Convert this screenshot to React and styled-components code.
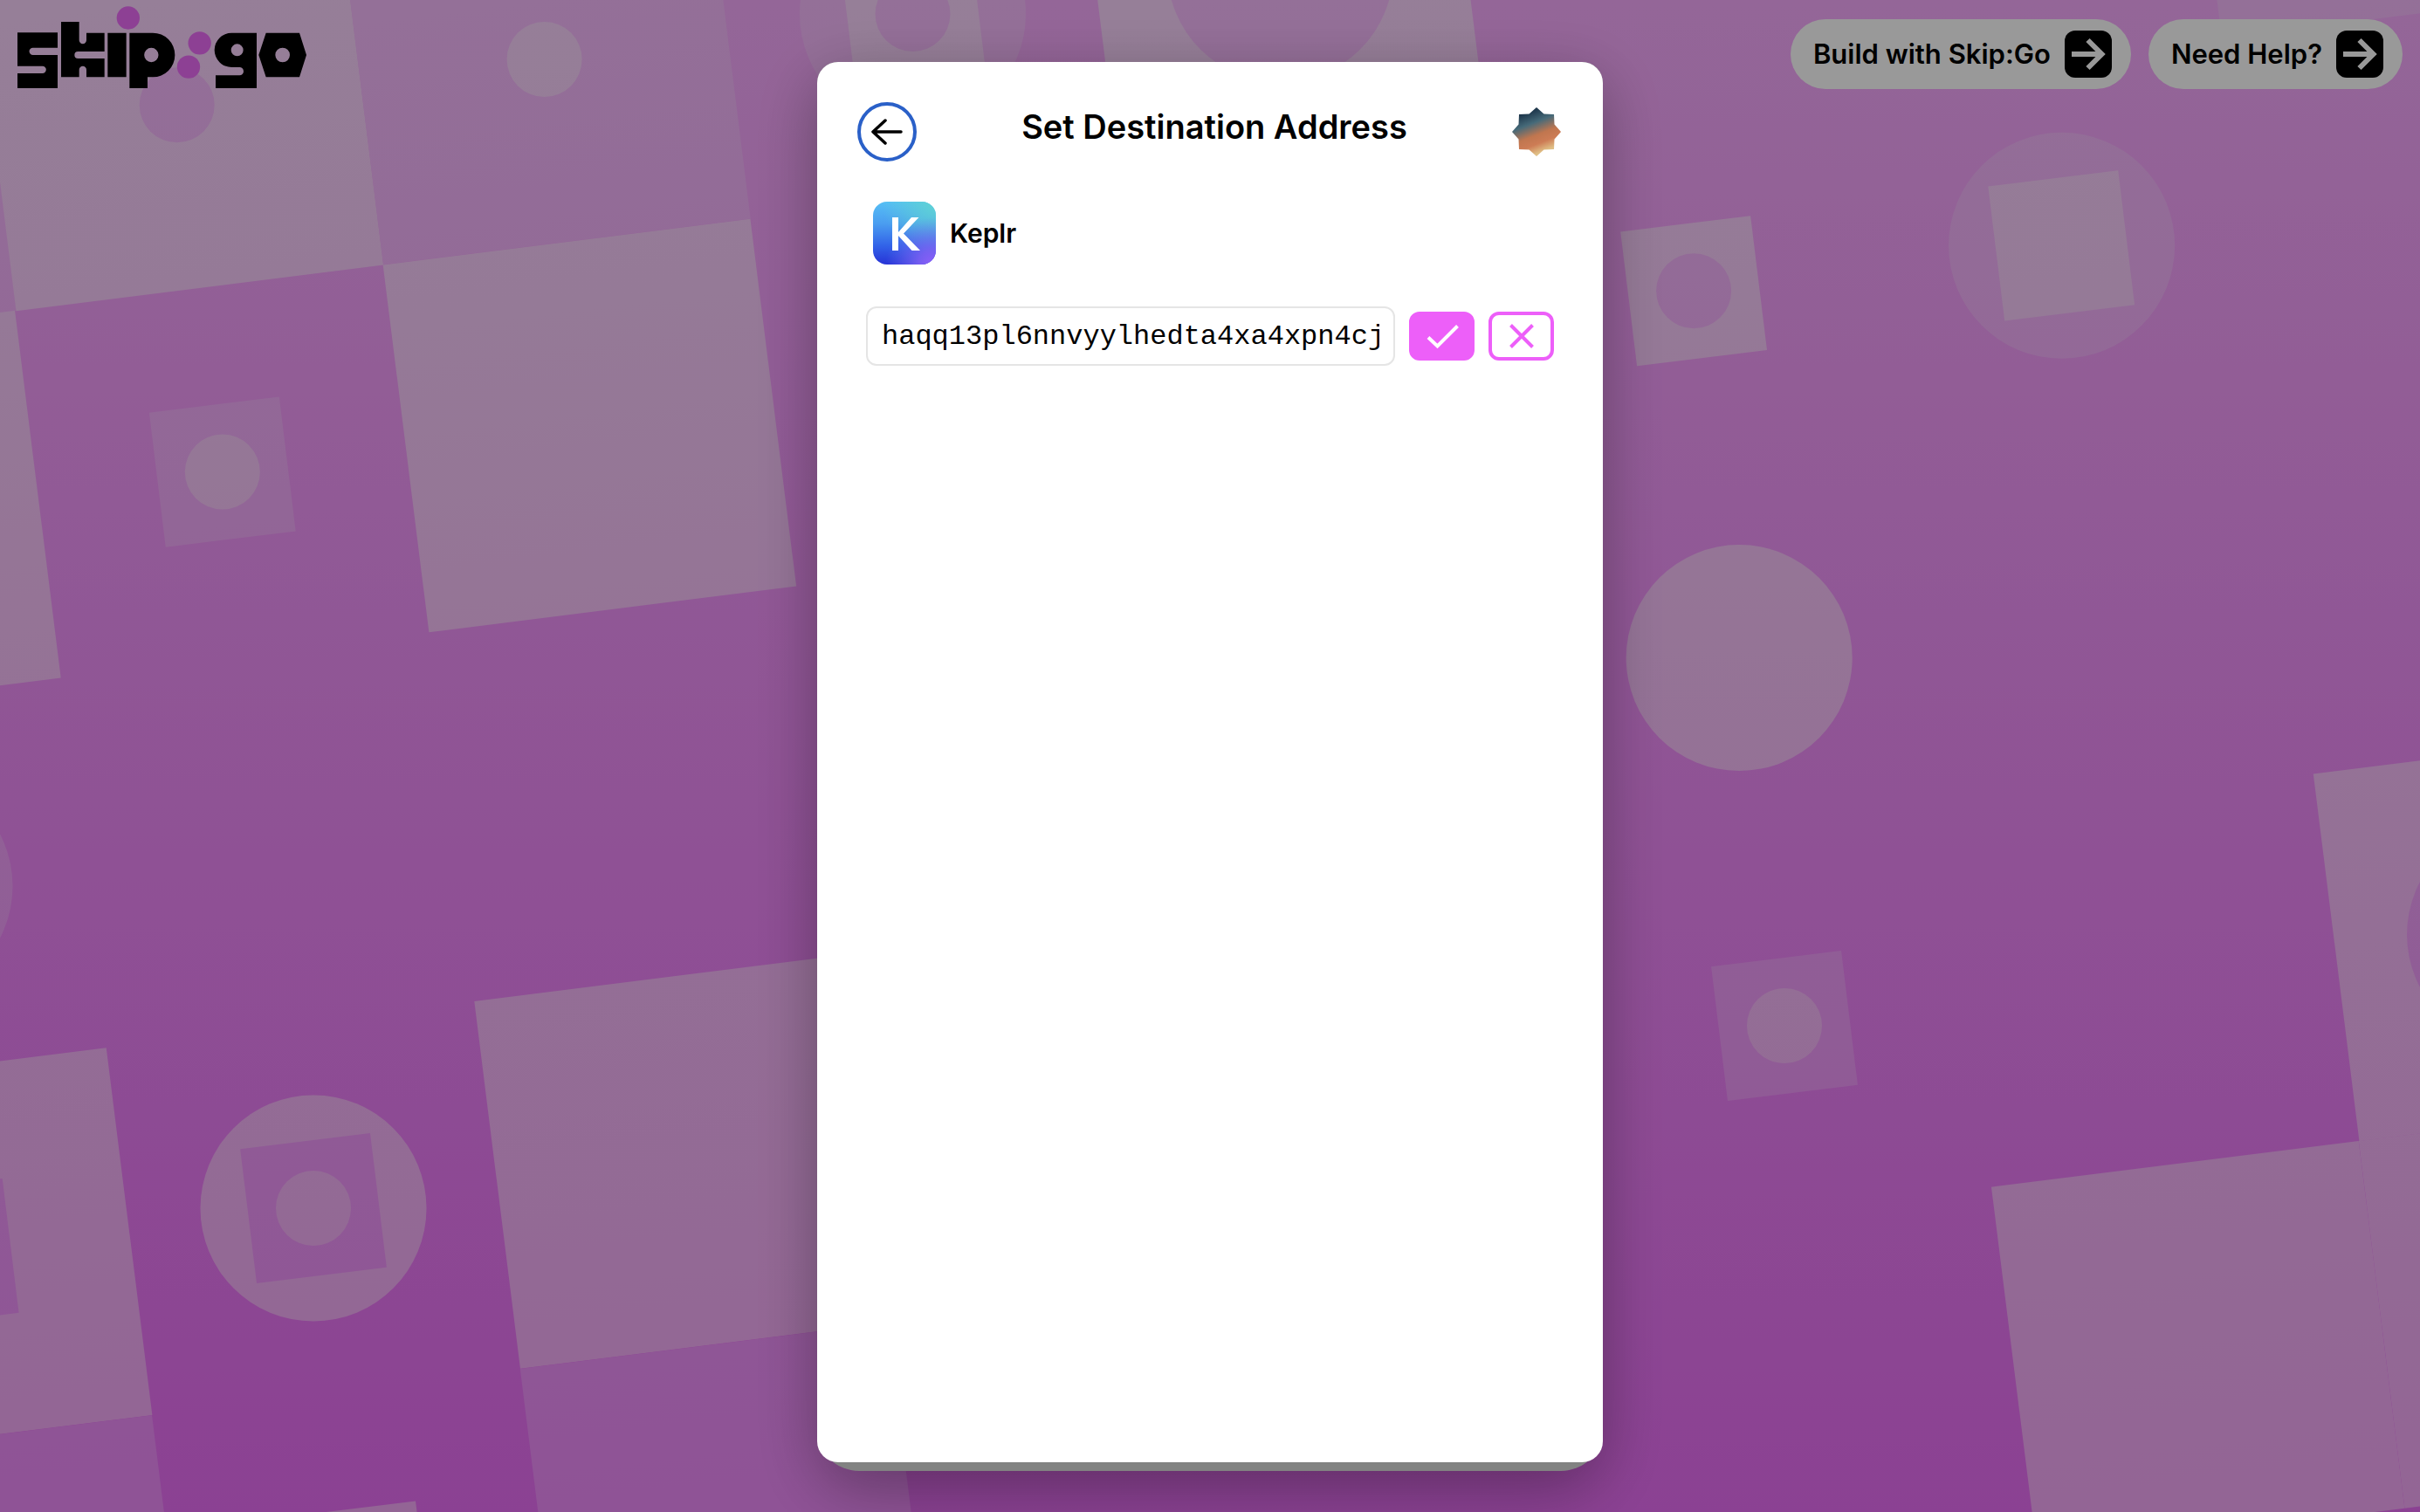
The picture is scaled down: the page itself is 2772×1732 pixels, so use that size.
import React from "react";
import styled, { createGlobalStyle } from "styled-components";

const GlobalStyle = createGlobalStyle`
  *, *::before, *::after { box-sizing: border-box; }
  body {
    margin: 0;
    font-family: Inter, "Liberation Sans", sans-serif;
    color: #000;
    background: #f087f9;
  }
`;

const Page = styled.div`
  min-height: 100vh;
`;

const Scene = styled.svg`
  position: fixed;
  inset: 0;
  z-index: -1;
  width: 100%;
  height: 100%;
`;

const TopBar = styled.header`
  display: flex;
  align-items: flex-start;
  justify-content: space-between;
  padding: 0 20px;
`;

const HomeLink = styled.a`
  display: block;
  padding-top: 7px;
`;

const Wordmark = styled.svg`
  display: block;
  width: 331px;
  height: 94px;
`;

const Nav = styled.nav`
  display: flex;
  gap: 20px;
  padding-top: 22px;
`;

const PillLink = styled.a`
  display: flex;
  align-items: center;
  gap: 16px;
  height: 80px;
  padding: 0 22px 0 26px;
  border-radius: 40px;
  background: #fff;
  color: #000;
  font-size: 31px;
  font-weight: 600;
  line-height: 40px;
  text-decoration: none;
  white-space: nowrap;
`;

const PillIcon = styled.svg`
  width: 54px;
  height: 54px;
  flex: none;
`;

const Backdrop = styled.div`
  position: fixed;
  inset: 0;
  display: flex;
  justify-content: center;
  padding: 71px 16px 47px;
  background: rgba(0, 0, 0, 0.4);
`;

const CardStack = styled.div`
  display: flex;
  width: 100%;
  max-width: 900px;
  padding-bottom: 10px;
  border-radius: 24px 24px 48px 48px;
  background: #828382;
  box-shadow: 0 20px 72px rgba(0, 0, 0, 0.32);
`;

const Dialog = styled.section`
  flex: 1;
  display: flex;
  flex-direction: column;
  padding: 46px 48px 46px 46px;
  border-radius: 24px;
  background: #fff;
`;

const DialogHeader = styled.header`
  display: grid;
  grid-template-columns: 68px 1fr 56px;
  align-items: center;
`;

const BackButton = styled.button`
  display: grid;
  place-items: center;
  width: 68px;
  height: 68px;
  padding: 0;
  border: 4px solid #2a60c8;
  border-radius: 50%;
  background: #fff;
  cursor: pointer;
`;

const Title = styled.h1`
  margin: 0;
  padding-bottom: 12px;
  font-size: 38px;
  font-weight: 600;
  line-height: 48px;
  text-align: center;
`;

const WalletRow = styled.div`
  display: flex;
  align-items: center;
  gap: 16px;
  padding: 46px 18px 0;
`;

const WalletName = styled.span`
  font-size: 30px;
  font-weight: 600;
  line-height: 36px;
`;

const AddressForm = styled.form`
  display: flex;
  align-items: center;
  gap: 16px;
  padding: 48px 8px 0 10px;
`;

const AddressInput = styled.input`
  flex: 1;
  min-width: 0;
  height: 68px;
  padding: 0 16px;
  border: 2px solid #e5e5e5;
  border-radius: 12px;
  background: #fff;
  color: #000;
  font-family: "Liberation Mono", "DejaVu Sans Mono", monospace;
  font-size: 32px;
  outline: none;
`;

const ActionButton = styled.button`
  display: grid;
  place-items: center;
  width: 75px;
  height: 56px;
  padding: 0;
  border: 4px solid #ed5ff9;
  border-radius: 12px;
  background: ${(p) => (p.$filled ? "#ed5ff9" : "#fff")};
  color: ${(p) => (p.$filled ? "#fff" : "#ed5ff9")};
  cursor: pointer;
`;

const ActionIcon = styled.svg`
  width: 40px;
  height: 32px;
  fill: none;
  stroke: currentColor;
  stroke-width: 4;
`;

const LIGHT = "url(#light)";
const FAINT = "url(#faint)";

function Tile({ x, y, fill }) {
  return (
    <rect x={x - 212} y={y - 212} width="424" height="424" fill={fill} transform={`rotate(-7.14 ${x} ${y})`} />
  );
}

function Square({ x, y, fill }) {
  return (
    <rect x={x - 75} y={y - 77.5} width="150" height="155" fill={fill} transform={`rotate(-7 ${x} ${y})`} />
  );
}

function Disc({ x, y, fill }) {
  return <circle cx={x} cy={y} r="129.5" fill={fill} />;
}

function Dot({ x, y, fill }) {
  return <circle cx={x} cy={y} r="43" fill={fill} />;
}

function Gradient({ id, from, to }) {
  return (
    <linearGradient id={id} gradientUnits="userSpaceOnUse" x1="0" y1="0" x2="0" y2="1732">
      <stop offset="0" stopColor={from} />
      <stop offset="1" stopColor={to} />
    </linearGradient>
  );
}

function Background() {
  return (
    <Scene viewBox="0 0 2772 1732" preserveAspectRatio="xMidYMid slice" aria-hidden="true">
      <defs>
        <Gradient id="base" from="#f7abfd" to="#e86df5" />
        <Gradient id="light" from="#fad4fd" to="#f5a8f8" />
        <Gradient id="faint" from="#f7bbfd" to="#ee8afa" />
      </defs>
      <rect width="2772" height="1732" fill="url(#base)" />

      <Tile x={-218} y={172} fill={FAINT} />
      <Tile x={202.5} y={119.5} fill={LIGHT} />
      <Dot x={202.7} y={120.3} fill={FAINT} />
      <Tile x={623} y={66.5} fill={FAINT} />
      <Dot x={623.6} y={68} fill={LIGHT} />
      <Tile x={675.4} y={487.5} fill={LIGHT} />
      <Tile x={-167} y={592.5} fill={LIGHT} />
      <Square x={254.8} y={540.6} fill={FAINT} />
      <Dot x={254.8} y={540.6} fill={LIGHT} />

      <Disc x={1045.5} y={16} fill={FAINT} />
      <Square x={1045.5} y={16} fill={LIGHT} />
      <Dot x={1045.5} y={16} fill={FAINT} />
      <Tile x={1466.5} y={-35} fill={LIGHT} />
      <Disc x={1466.5} y={-35} fill={FAINT} />

      <Tile x={2729} y={-193} fill={FAINT} />
      <Disc x={2361.6} y={281.3} fill={FAINT} />
      <Square x={2361.2} y={281.4} fill={LIGHT} />
      <Square x={1940.1} y={333.2} fill={LIGHT} />
      <Dot x={1940.1} y={333.2} fill={FAINT} />
      <Disc x={1992.2} y={753.6} fill={LIGHT} />
      <Square x={2044} y={1175} fill={FAINT} />
      <Dot x={2044} y={1175} fill={LIGHT} />
      <Tile x={2886.5} y={1070.5} fill={LIGHT} />
      <Disc x={2886.5} y={1070.5} fill={FAINT} />
      <Tile x={2517.7} y={1543.7} fill={LIGHT} />
      <Tile x={2938.5} y={1491} fill={LIGHT} />

      <Disc x={-115} y={1015} fill={FAINT} />
      <Tile x={-62.3} y={1437} fill={LIGHT} />
      <Square x={-62.3} y={1436} fill={FAINT} />
      <Tile x={-10} y={1858} fill={FAINT} />
      <Disc x={359} y={1384} fill={LIGHT} />
      <Square x={359} y={1384} fill={FAINT} />
      <Dot x={359} y={1384} fill={LIGHT} />
      <Square x={411} y={1805.5} fill={LIGHT} />
      <Tile x={780} y={1331} fill={LIGHT} />
      <Tile x={832.5} y={1752} fill={FAINT} />
    </Scene>
  );
}

function SkipGoLogo() {
  return (
    <Wordmark viewBox="60 21 993 282" role="img" aria-label="skip:go">
      <g fill="#000" fillRule="evenodd">
        <path d="M60 112H198V164H113a12.5 12.5 0 0 0 0 25H198V303H60V252H146a12.5 12.5 0 0 0 0-25H60Z" />
        <path d="M210 75H272V138a12.5 12.5 0 0 0 25 0V113H359V177H268a12 12 0 0 0 0 24H359V265H297V240a12.5 12.5 0 0 0-25 0V265H210Z" />
        <path d="M370 113H434V265H370Z" />
        <path d="M445 113H525a76 76 0 0 1 0 152H507V303H445ZM495.500 189a24.500 24.500 0 1 0 49 0a24.500 24.500 0 1 0-49 0Z" />
        <path d="M882 113V303H741V259H823a14 14 0 0 0 0-28H796a59 59 0 0 1 0-118ZM794 172a21 21 0 1 0 42 0a21 21 0 1 0-42 0Z" />
        <path d="M914 113H1029L1053 189L1029 265H914L889 189ZM946 189a25 25 0 1 0 50 0a25 25 0 1 0-50 0Z" />
      </g>
      <g fill="#eb6cf7">
        <circle cx="440.500" cy="61.500" r="39.500" />
        <circle cx="686" cy="148" r="39.500" />
        <circle cx="648" cy="230" r="39.500" />
      </g>
    </Wordmark>
  );
}

function ArrowBadge() {
  return (
    <PillIcon viewBox="0 0 54 54" aria-hidden="true">
      <rect width="54" height="54" rx="12" fill="#000" />
      <path d="M8 27H40M26.500 11L42.500 27L26.500 43" fill="none" stroke="#fff" strokeWidth="6" />
    </PillIcon>
  );
}

function AccountStar() {
  return (
    <svg width="56" height="56" viewBox="-28 -28 56 56" aria-hidden="true">
      <defs>
        <linearGradient id="star" gradientUnits="userSpaceOnUse" x1="-11" y1="-25" x2="9" y2="26">
          <stop offset="0" stopColor="#152c42" />
          <stop offset="0.3" stopColor="#466a79" />
          <stop offset="0.56" stopColor="#c0764f" />
          <stop offset="0.74" stopColor="#cd7c55" />
          <stop offset="0.92" stopColor="#dfbd84" />
          <stop offset="1" stopColor="#e2c48c" />
        </linearGradient>
      </defs>
      <path
        d="M0-28L8.500-20.500L20-20L20.500-8.500L28 0L20.500 8.500L20 20L8.500 20.500L0 28L-8.500 20.500L-20 20L-20.500 8.500L-28 0L-20.500-8.500L-20-20L-8.500-20.500Z"
        fill="url(#star)"
      />
    </svg>
  );
}

function KeplrLogo() {
  return (
    <svg width="72" height="72" viewBox="0 0 72 72" aria-hidden="true">
      <defs>
        <linearGradient id="keplrBase" x1="0" y1="0" x2="0" y2="1">
          <stop offset="0" stopColor="#56bff5" />
          <stop offset="0.35" stopColor="#4a9df0" />
          <stop offset="0.7" stopColor="#3263e8" />
          <stop offset="1" stopColor="#2733d6" />
        </linearGradient>
        <radialGradient id="keplrViolet" cx="0.95" cy="1" r="0.75">
          <stop offset="0" stopColor="#8f60fa" />
          <stop offset="0.3" stopColor="#8062f4" stopOpacity="0.85" />
          <stop offset="1" stopColor="#6a6cf0" stopOpacity="0" />
        </radialGradient>
        <radialGradient id="keplrTeal" cx="1" cy="0" r="0.85">
          <stop offset="0" stopColor="#5fd3d3" />
          <stop offset="1" stopColor="#5fd3d3" stopOpacity="0" />
        </radialGradient>
      </defs>
      <rect width="72" height="72" rx="16" fill="url(#keplrBase)" />
      <rect width="72" height="72" rx="16" fill="url(#keplrTeal)" />
      <rect width="72" height="72" rx="16" fill="url(#keplrViolet)" />
      <path d="M22 18H29V35L44 18H52.500L35 36.500L54 56H44.500L29 39V56H22Z" fill="#fff" />
    </svg>
  );
}

export default function App() {
  return (
    <Page>
      <GlobalStyle />
      <Background />
      <TopBar>
        <HomeLink href="#home">
          <SkipGoLogo />
        </HomeLink>
        <Nav>
          <PillLink href="#build">
            Build with Skip:Go
            <ArrowBadge />
          </PillLink>
          <PillLink href="#help">
            Need Help?
            <ArrowBadge />
          </PillLink>
        </Nav>
      </TopBar>

      <Backdrop>
        <CardStack>
          <Dialog role="dialog" aria-modal="true" aria-labelledby="dialog-title">
            <DialogHeader>
              <BackButton type="button" aria-label="Back">
                <svg width="36" height="30" viewBox="0 0 36 30" fill="none" stroke="#000" strokeWidth="3.5" strokeLinecap="round" strokeLinejoin="round">
                  <path d="M34 15H2M16 2L2 15L16 28" />
                </svg>
              </BackButton>
              <Title id="dialog-title">Set Destination Address</Title>
              <AccountStar />
            </DialogHeader>
            <WalletRow>
              <KeplrLogo />
              <WalletName>Keplr</WalletName>
            </WalletRow>
            <AddressForm onSubmit={(e) => e.preventDefault()}>
              <AddressInput
                type="text"
                aria-label="Destination address"
                spellCheck={false}
                defaultValue="haqq13pl6nnvyylhedta4xa4xpn4cj"
              />
              <ActionButton type="submit" $filled aria-label="Confirm">
                <ActionIcon viewBox="0 0 40 32">
                  <path d="M4 17.500L14.500 27.500L37.500 4.500" />
                </ActionIcon>
              </ActionButton>
              <ActionButton type="button" aria-label="Cancel">
                <ActionIcon viewBox="0 0 40 32">
                  <path d="M7.500 3.500L32.500 28.500M32.500 3.500L7.500 28.500" />
                </ActionIcon>
              </ActionButton>
            </AddressForm>
          </Dialog>
        </CardStack>
      </Backdrop>
    </Page>
  );
}
